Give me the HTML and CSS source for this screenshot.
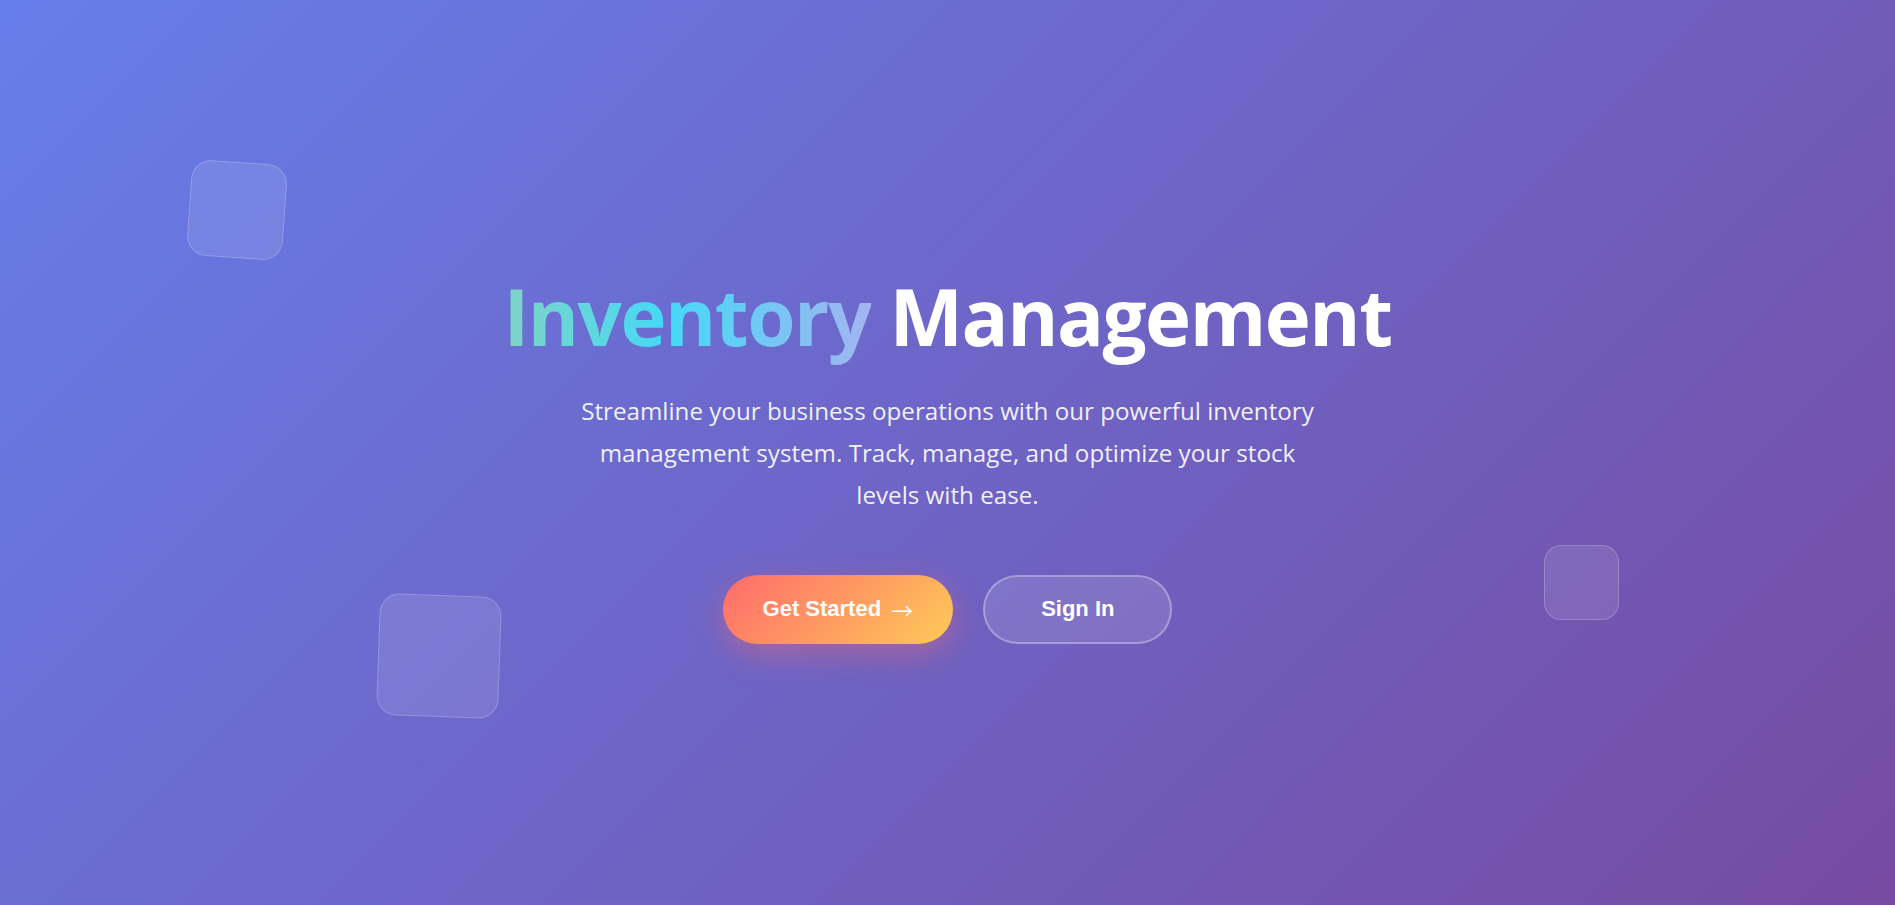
FILE: index.html
```html
<!DOCTYPE html>
<html lang="en">
<head>
<meta charset="utf-8">
<title>Inventory Management</title>
<link rel="stylesheet" href="styles.css">
</head>
<body>
<main class="hero">
  <div class="shape shape-a"></div>
  <div class="shape shape-b"></div>
  <div class="shape shape-c"></div>
  <div class="hero-content">
    <h1 class="title"><span class="accent">Inventory</span> Management</h1>
    <p class="subtitle">Streamline your business operations with our powerful inventory management system. Track, manage, and optimize your stock levels with ease.</p>
    <div class="actions">
      <a class="btn btn-primary" href="#">Get Started <span class="arrow">→</span></a>
      <a class="btn btn-secondary" href="#">Sign In</a>
    </div>
  </div>
</main>
</body>
</html>
```

FILE: styles.css
```css
* { box-sizing: border-box; }
html, body { margin: 0; padding: 0; height: 100%; }
body {
  font-family: "Open Sans", "Noto Sans", sans-serif;
  color: #fff;
  overflow: hidden;
}
.hero {
  position: relative;
  min-height: 100vh;
  background: linear-gradient(135deg, #667eea 0%, #764ba2 100%);
  display: flex;
  align-items: center;
  justify-content: center;
  overflow: hidden;
}
.hero-content {
  display: flex;
  flex-direction: column;
  align-items: center;
  text-align: center;
  padding-top: 9px;
}
.title {
  margin: 0;
  font-size: 78px;
  font-weight: 700;
  line-height: 1.2;
  letter-spacing: -1.5px;
}
.accent {
  background: linear-gradient(90deg, #7fd3c4 0%, #45d9f8 45%, #a4b4f0 100%);
  -webkit-background-clip: text;
  background-clip: text;
  color: transparent;
}
.subtitle {
  margin: 26px 0 0;
  max-width: 745px;
  font-size: 24.2px;
  line-height: 42px;
  color: rgba(255,255,255,0.92);
}
.actions {
  display: flex;
  gap: 30px;
  margin-top: 59px;
}
.btn {
  display: inline-flex;
  align-items: center;
  justify-content: center;
  height: 69px;
  border-radius: 50px;
  font-family: "Liberation Sans", Arial, sans-serif;
  font-weight: 700;
  font-size: 22px;
  color: #fff;
  text-decoration: none;
}
.btn-primary {
  padding: 0 40px;
  background: linear-gradient(135deg, #ff6b6b 0%, #feca57 100%);
  box-shadow: 0 10px 30px rgba(255, 107, 107, 0.4);
}
.arrow {
  margin-left: 10px;
  font-family: "Noto Sans CJK SC", sans-serif;
  font-weight: 400;
  vertical-align: 2px;
}
.btn-secondary {
  padding: 0 56px;
  background: rgba(255,255,255,0.12);
  border: 2px solid rgba(255,255,255,0.3);
}
.shape {
  position: absolute;
  border-radius: 20px;
  background: rgba(255,255,255,0.1);
  border: 1px solid rgba(255,255,255,0.2);
}
.shape-a { left: 189px; top: 162px; width: 96px; height: 96px; transform: rotate(4deg); }
.shape-b { left: 378px; top: 595px; width: 122px; height: 122px; transform: rotate(2deg); }
.shape-c { left: 1544px; top: 545px; width: 75px; height: 75px; border-radius: 17px; }
```
